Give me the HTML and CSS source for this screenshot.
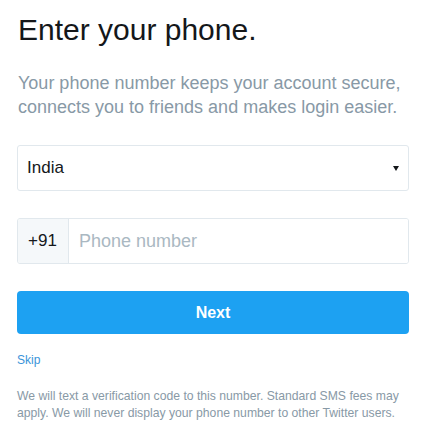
FILE: index.html
```html
<!DOCTYPE html>
<html lang="en">
<head>
  <meta charset="UTF-8" />
  <meta name="viewport" content="width=device-width, initial-scale=1" />
  <title>Enter your phone</title>
  <link rel="stylesheet" href="styles.css">
</head>
<body>
  <div class="container">
    <h1 class="title">Enter your phone.</h1>
    <p class="subtitle">Your phone number keeps your account secure, connects you to friends and makes login easier.</p>

    <div class="country-select">
      <span class="country-name">India</span>
      <span class="caret"></span>
    </div>

    <div class="phone-group">
      <div class="phone-prefix">+91</div>
      <input type="tel" class="phone-input" placeholder="Phone number" />
    </div>

    <button type="button" class="next-btn">Next</button>

    <a href="#" class="skip-link">Skip</a>

    <p class="footnote">We will text a verification code to this number. Standard SMS fees may apply. We will never display your phone number to other Twitter users.</p>
  </div>
</body>
</html>
```

FILE: styles.css
```css
body {
  font-family: "Liberation Sans", Arial, sans-serif;
  background: #fff;
  margin: 0;
  color: #14171a;
}
.container {
  padding: 12px 18px 0 17px;
}
.title {
  font-size: 30px;
  font-weight: normal;
  line-height: 36px;
  margin: 0 0 23px 1px;
}
.subtitle {
  font-size: 18px;
  line-height: 24px;
  color: #8899a6;
  margin: 0 0 26px 1px;
}
.country-select {
  display: flex;
  align-items: center;
  justify-content: space-between;
  height: 46px;
  box-sizing: border-box;
  border: 1px solid #e1e8ed;
  border-radius: 3px;
  padding: 0 9px 0 9px;
  margin-bottom: 27px;
}
.country-name {
  font-size: 17px;
}
.caret {
  width: 0;
  height: 0;
  border-left: 3px solid transparent;
  border-right: 3px solid transparent;
  border-top: 5px solid #14171a;
}
.phone-group {
  display: flex;
  height: 46px;
  box-sizing: border-box;
  border: 1px solid #e1e8ed;
  border-radius: 3px;
  margin-bottom: 27px;
  overflow: hidden;
}
.phone-prefix {
  display: flex;
  align-items: center;
  width: 51px;
  box-sizing: border-box;
  padding-left: 10px;
  background: #f5f8fa;
  border-right: 1px solid #e1e8ed;
  font-size: 17px;
}
.phone-input {
  flex: 1;
  border: none;
  outline: none;
  padding: 0 10px;
  font-family: inherit;
  font-size: 18px;
  color: #14171a;
}
.phone-input::placeholder {
  color: #aab8c2;
}
.next-btn {
  display: block;
  width: 100%;
  height: 43px;
  background: #1da1f2;
  color: #fff;
  border: none;
  border-radius: 4px;
  font-family: inherit;
  font-size: 16px;
  font-weight: bold;
  cursor: pointer;
}
.skip-link {
  display: inline-block;
  margin-top: 19px;
  font-size: 12px;
  color: #3b94d9;
  text-decoration: none;
}
.footnote {
  font-size: 12.2px;
  line-height: 17px;
  color: #8899a6;
  margin: 20px 0 0;
}
```
